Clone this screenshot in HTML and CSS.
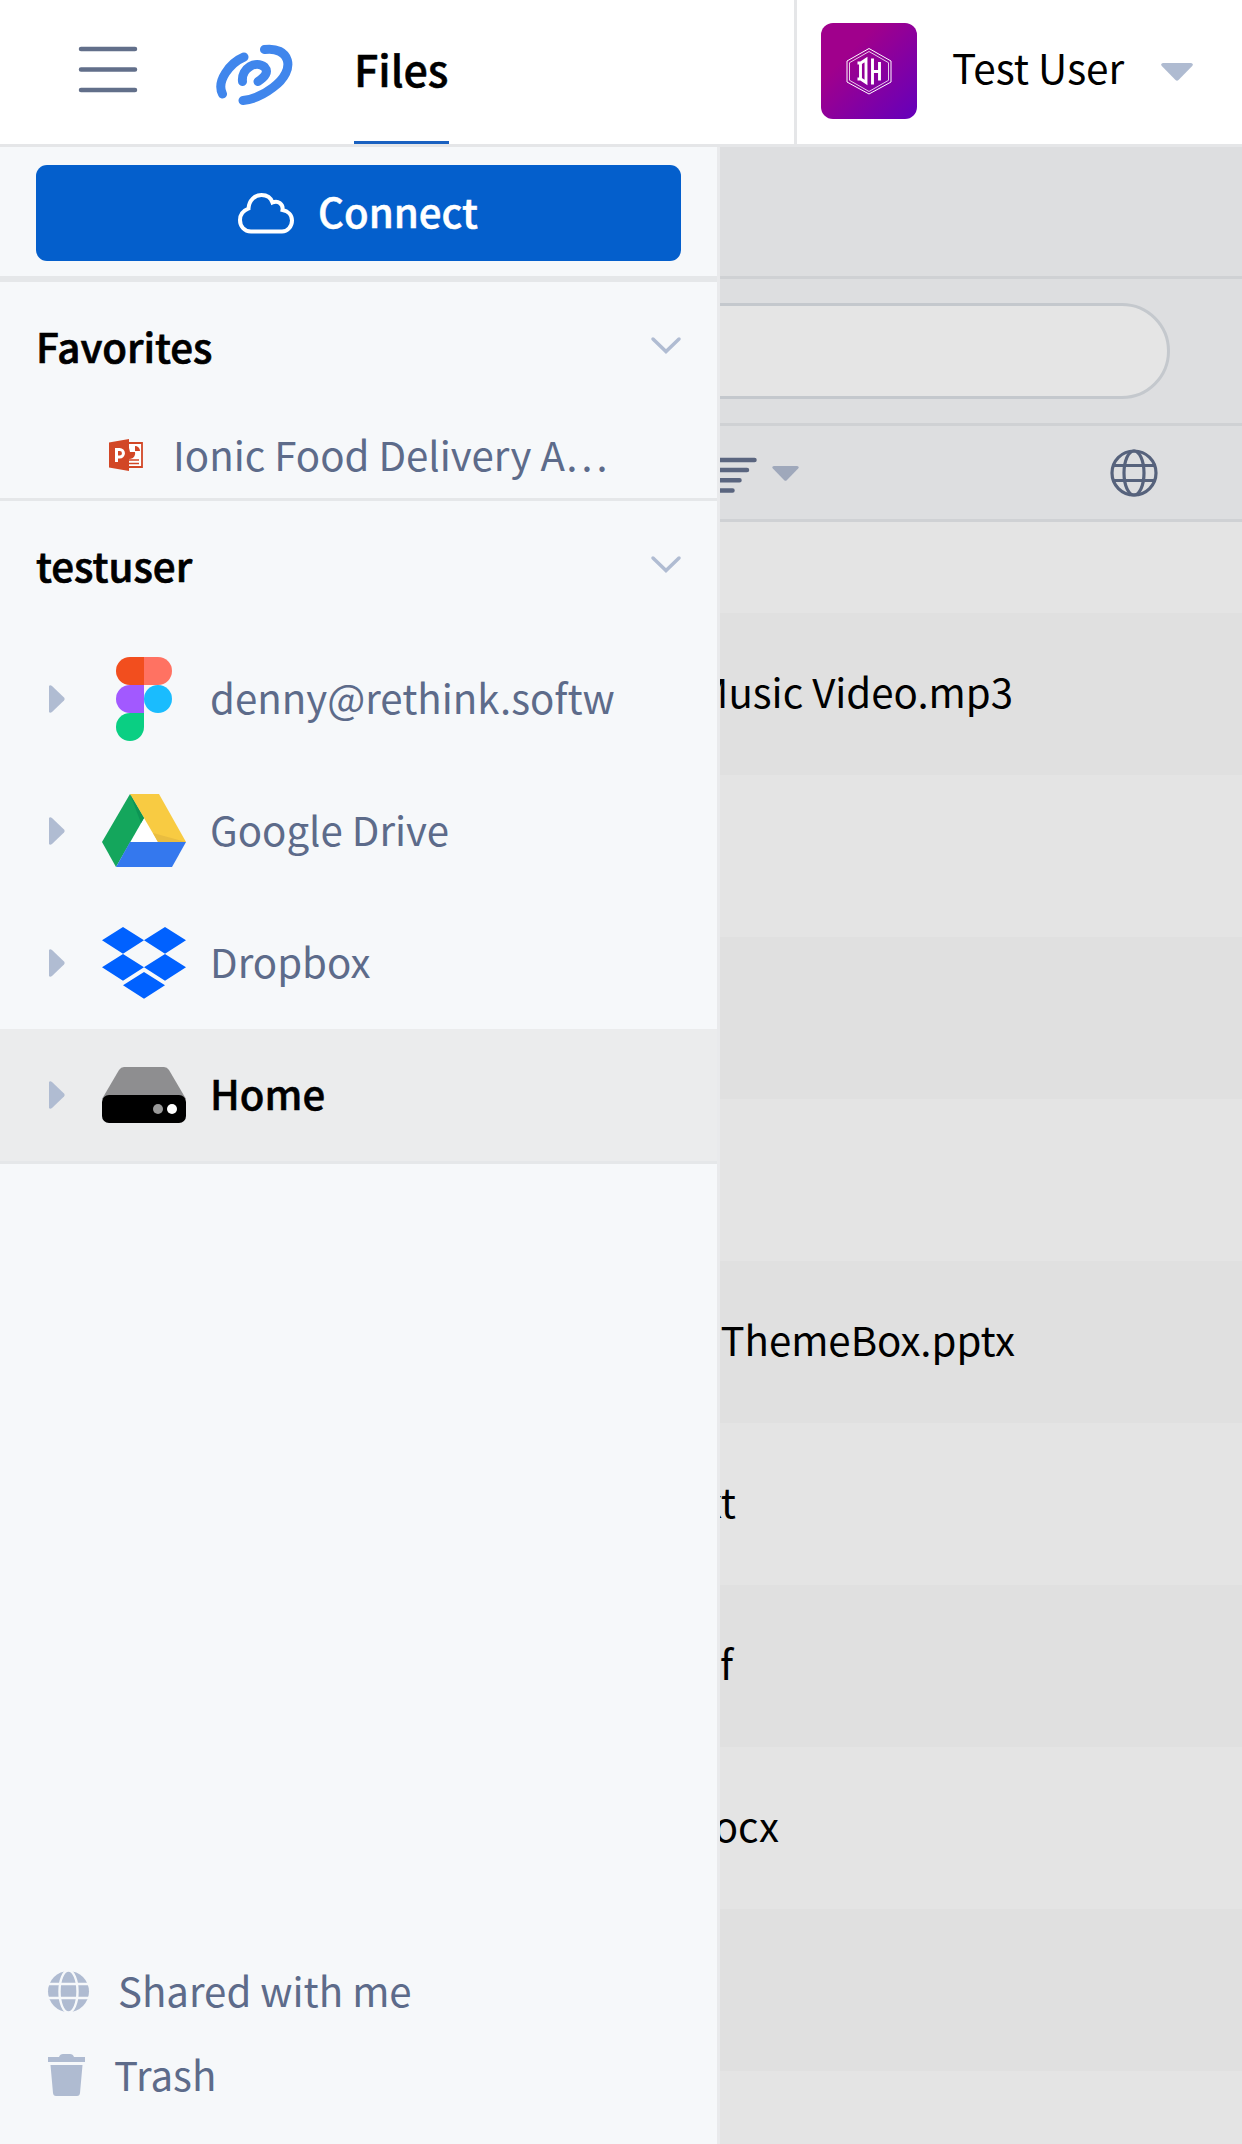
FILE: index.html
```html
<!DOCTYPE html>
<html lang="en">
<head>
<meta charset="utf-8">
<title>Files</title>
<link rel="stylesheet" href="styles.css">
</head>
<body>
<div class="app">
  <header class="topbar">
    <svg class="menu" viewBox="0 0 58 48"><path d="M2 4h54M2 24.500h54M2 45h54" /></svg>
    <svg class="brand" viewBox="0 0 76 60"><path d="M28 12C14 18 0 36 6.500 49M48.500 4.500C73 1 82 24 57 42.500Q42 54 27 55.500M26.500 36.500C25 23 40 15 48.500 22C53 27 49 32 42 36.500" /></svg>
    <nav class="tabs"><a class="tab">Files</a></nav>
    <div class="account">
      <svg class="avatar" viewBox="0 0 96 96">
        <defs><linearGradient id="avatar-fill" x1="0" y1="0" x2="1" y2="1"><stop offset=".3" stop-color="#a0008c"/><stop offset=".95" stop-color="#6800b8"/></linearGradient></defs>
        <rect width="96" height="96" rx="12" fill="url(#avatar-fill)"/>
        <g fill="none" stroke="#fff"><path d="M48 25.500l22 12.500v21L48 71 26 59V38z" stroke-width="1"/><path d="M48 28.500l19.500 11.200v17.600L48 68.500 28.500 57.300V39.700z" stroke-width=".8"/><path d="M36.500 40h3M36.500 56h3M39.500 40v16M39 40.500l6-4v23l-6-4M51.500 35.500v26M58.500 39v18.500M51.500 48.500h7" stroke-width="2.900"/></g>
      </svg>
      <span class="user">Test User</span>
      <svg class="caret" viewBox="0 0 32 18"><path d="M2 0h28q3 1 1.200 3L17.500 17q-1.500 1.500-3 0L.8 3Q-1 1 2 0z"/></svg>
    </div>
  </header>

  <main class="content">
    <div class="pathbar"></div>
    <div class="searchbar"><div class="search"></div></div>
    <div class="toolbar">
      <svg class="sort" viewBox="0 0 46 36"><path d="M2 3h41.500M2 13h34M2 23.300h26.500M2 33.500h19.500"/></svg>
      <svg class="caret caret-sort" viewBox="0 0 32 18"><path d="M2 0h28q3 1 1.200 3L17.500 17q-1.500 1.500-3 0L.8 3Q-1 1 2 0z"/></svg>
      <svg class="world" viewBox="0 0 48 48"><circle cx="24" cy="24" r="22"/><ellipse cx="24" cy="24" rx="10" ry="22"/><path d="M3.500 16.500h41M3.500 31.500h41"/></svg>
    </div>
    <div class="list">
      <div class="head"></div>
      <div class="row"><span class="name name-mp3">Music Video.mp3</span></div>
      <div class="row"></div>
      <div class="row"></div>
      <div class="row"></div>
      <div class="row"><span class="name name-pptx">ThemeBox.pptx</span></div>
      <div class="row"><span class="name name-txt">xt</span></div>
      <div class="row"><span class="name name-pdf">f</span></div>
      <div class="row"><span class="name name-docx">ocx</span></div>
      <div class="row"></div>
      <div class="row row-last"></div>
    </div>
  </main>

  <aside class="drawer">
    <div class="connect-box">
      <button class="connect"><svg class="cloud" viewBox="0 0 56 41"><path d="M13 38.500C6 38.500 2 33 2 27C2 21 5.500 17.500 10.500 15.500C11 7 17 2 23.500 2C29 2 33 5 34.500 9.500C40 7 45.500 11 44.500 17C50 18 54 22 54 27.500C54 33.500 49.500 38.500 44 38.500z"/></svg><span class="connect-label">Connect</span></button>
    </div>
    <section class="favorites">
      <h2 class="heading"><span class="heading-text">Favorites</span><svg class="chevron" viewBox="0 0 30 17"><path d="M2 2l13 12.500L28 2"/></svg></h2>
      <div class="favorite">
        <svg class="ppt" viewBox="0 0 34 32"><path d="M19 4h14v24H19z" fill="#fff" stroke="#d24726" stroke-width="1.800"/><path d="M20 21h10M20 24.500h10" stroke="#d24726" stroke-width="1.600"/><path d="M20 9a5.500 5.500 0 1 0 6 4h-5z" fill="#d24726"/><path d="M26 7v5h5a5 5 0 0 0-5-5z" fill="#d24726"/><path d="M0 3.500L20 0v32L0 28.500z" fill="#d24726"/><path d="M7.500 23V10.500h3.200a3.600 3.600 0 0 1 0 7.500H7.500" fill="none" stroke="#fff" stroke-width="3"/></svg>
        <span class="favorite-name">Ionic Food Delivery A…</span>
      </div>
    </section>
    <section class="drives">
      <h2 class="heading"><span class="heading-text">testuser</span><svg class="chevron" viewBox="0 0 30 17"><path d="M2 2l13 12.500L28 2"/></svg></h2>
      <div class="drive"><svg class="arrow" viewBox="0 0 16 28"><path d="M0 1Q1-.5 3 1L15 12.500q1.500 1.500 0 3L3 27Q1 28.500 0 27z"/></svg>
        <svg class="logo" viewBox="0 0 84 84"><path d="M28 0h14v28H28a14 14 0 0 1 0-28z" fill="#f24e1e"/><path d="M42 0h14a14 14 0 0 1 0 28H42z" fill="#ff7262"/><path d="M28 28h14v28H28a14 14 0 0 1 0-28z" fill="#a259ff"/><circle cx="56" cy="42" r="14" fill="#1abcfe"/><path d="M28 56h14v14a14 14 0 1 1-14-14z" fill="#0acf83"/></svg>
        <span class="label">denny@rethink.softw</span></div>
      <div class="drive"><svg class="arrow" viewBox="0 0 16 28"><path d="M0 1Q1-.5 3 1L15 12.500q1.500 1.500 0 3L3 27Q1 28.500 0 27z"/></svg>
        <svg class="logo" viewBox="0 0 84 84"><path d="M42 29L56 53H28z" fill="#fff"/><path d="M28 5L0 53l14 25 28-49z" fill="#14a65c"/><path d="M28 5h29l27 48H56z" fill="#f8cb42"/><path d="M28 53h56L70 78H14z" fill="#3478ee"/><path d="M28 5l14 24-3 5z" fill="#0d9555"/><path d="M51 44l33 9H56z" fill="#e9bd40"/></svg>
        <span class="label">Google Drive</span></div>
      <div class="drive"><svg class="arrow" viewBox="0 0 16 28"><path d="M0 1Q1-.5 3 1L15 12.500q1.500 1.500 0 3L3 27Q1 28.500 0 27z"/></svg>
        <svg class="logo" viewBox="0 0 84 84"><path d="M21 6l21 13.300-21 13.400L0 19.300zM63 6l21 13.300-21 13.400-21-13.400zM21 33l21 13.300-21 13.400L0 46.300zM63 33l21 13.300-21 13.400-21-13.400zM42 51l21 13.300L42 77.700 21 64.300z" fill="#0061ff"/></svg>
        <span class="label">Dropbox</span></div>
      <div class="drive drive-active"><svg class="arrow" viewBox="0 0 16 28"><path d="M0 1Q1-.5 3 1L15 12.500q1.500 1.500 0 3L3 27Q1 28.500 0 27z"/></svg>
        <svg class="logo" viewBox="0 0 84 84"><path d="M0 46L17 17q2-3 5-3h40q3 0 5 3l17 29z" fill="#8e8e90"/><rect y="42" width="84" height="28" rx="7"/><circle cx="56" cy="56" r="5" fill="#999"/><circle cx="70" cy="56" r="5" fill="#fff"/></svg>
        <span class="label">Home</span></div>
    </section>
    <footer class="links">
      <div class="link"><svg class="link-icon" viewBox="0 0 41 41"><circle cx="20.500" cy="20.500" r="20.500"/><g fill="none" stroke="#f6f8fa" stroke-width="2.400"><ellipse cx="20.500" cy="20.500" rx="9" ry="21"/><path d="M0 13h41M0 27h41"/></g></svg><span class="link-text">Shared with me</span></div>
      <div class="link link-second"><svg class="link-icon link-icon-trash" viewBox="0 0 37 42"><path d="M0 3h11q1-3 4-3h7q3 0 4 3h11v5H0zM2.500 11h32L32 39q-.3 3-3 3H8q-2.700 0-3-3z"/></svg><span class="link-text">Trash</span></div>
    </footer>
  </aside>
</div>
</body>
</html>
```
FILE: styles.css
```css
* { box-sizing: border-box; }
body { margin: 0; font-family: "Noto Sans CJK SC", "Noto Sans", sans-serif; font-size: 40.2px; line-height: 58px; color: #000; }
svg { display: block; flex: none; overflow: visible; }
span, a { white-space: nowrap; }
.app { position: relative; width: 1242px; height: 2144px; overflow: hidden; display: flex; flex-direction: column; }

.topbar { height: 147px; flex: none; display: flex; background: #fff; border-bottom: 3px solid #e5e6e8; }
.menu { width: 58px; height: 48px; margin: 45px 0 0 79px; fill: none; stroke: #626f8a; stroke-width: 4.500; stroke-linecap: round; }
.brand { width: 76px; height: 60px; margin: 45px 0 0 79px; fill: none; stroke: #4086ec; stroke-width: 9; stroke-linecap: round; }
.tabs { margin-left: 62px; display: flex; }
.tab { width: 95px; height: 144px; border-bottom: 3px solid #1a61c0; padding-top: 39px; font-size: 43px; font-weight: 500; -webkit-text-stroke: .5px; }
.account { margin-left: auto; width: 448px; border-left: 3px solid #e5e6e8; display: flex; }
.avatar { width: 96px; height: 96px; margin: 23px 0 0 24px; }
.user { margin: 38px 0 0 35px; width: 172px; font-size: 40.500px; }
.caret { width: 32px; height: 18px; margin: 63px 0 0 37px; fill: #afbbd1; }

.content { flex: 1; display: flex; flex-direction: column; background: #dddee0; }
.pathbar { height: 132px; border-bottom: 3px solid #cfd1d4; }
.searchbar { height: 147px; border-bottom: 3px solid #cfd1d4; padding: 24px 72px 0 500px; }
.search { height: 96px; background: #e5e5e5; border: 3px solid #c4c8cd; border-radius: 48px; }
.toolbar { height: 96px; border-bottom: 3px solid #cfd1d4; display: flex; padding-left: 711px; }
.sort { width: 46px; height: 36px; margin-top: 31px; fill: none; stroke: #5a657f; stroke-width: 4.500; stroke-linecap: round; }
.caret-sort { width: 27px; height: 15px; margin: 40px 0 0 15px; fill: #9fa8bb; }
.world { width: 48px; height: 48px; margin: 23px 84px 0 auto; fill: none; stroke: #56627c; stroke-width: 3.200; }
.list { flex: 1; background: #e4e4e4; }
.head { height: 91px; }
.row { height: 162px; display: flex; align-items: center; }
.row:nth-child(even) { background: #e0e0e0; }
.row-last { height: 74px; }
.name { display: block; text-align: right; margin-top: -6px; }
.name-mp3 { width: 1013px; }
.name-pptx { width: 1015px; }
.name-txt { width: 736px; }
.name-pdf { width: 733px; }
.name-docx { width: 779px; }

/* Navigation drawer, open over the file list */
.drawer { position: absolute; left: 0; top: 147px; bottom: 0; width: 720px; background: #f6f8fa; border-right: 3px solid #e9eaec; display: flex; flex-direction: column; color: #5d6b8a; }
.connect-box { height: 135px; padding: 18px 36px 0; border-bottom: 6px solid #e5e7e9; }
.connect { width: 645px; height: 96px; border: 0; border-radius: 11px; background: #045fcc; color: #fff; font: inherit; font-weight: 500; -webkit-text-stroke: .5px; padding: 0 0 0 202px; display: flex; }
.cloud { width: 56px; height: 41px; margin: 28px 24px 0 0; fill: none; stroke: #fff; stroke-width: 4; }
.connect-label { margin-top: 17px; }
.favorites { height: 219px; border-bottom: 3px solid #e5e7e9; padding-top: 34px; }
.heading { margin: 0; padding: 0 36px; font-size: 40.300px; font-weight: 500; -webkit-text-stroke: .7px; color: #000; display: flex; justify-content: space-between; }
.heading-text { padding-top: 1px; margin-bottom: -1px; }
.chevron { width: 30px; height: 17px; margin-top: 21px; fill: none; stroke: #b0bcd2; stroke-width: 3.500; stroke-linecap: round; }
.favorite { display: flex; align-items: center; margin-top: 50px; padding-left: 109px; }
.ppt { width: 34px; height: 32px; margin-top: 4px; }
.favorite-name { margin: 1px 0 -1px 30px; }
.drives { padding-top: 34px; }
.drives .heading { margin-bottom: 40px; }
.drive { height: 132px; display: flex; align-items: center; padding-left: 49px; }
.drive-active { height: 135px; background: #ebeced; border-bottom: 3px solid #e5e7e9; color: #000; font-weight: 500; -webkit-text-stroke: .5px; }
.drive-active .logo { -webkit-text-stroke: 0; }
.arrow { width: 16px; height: 28px; fill: #b0bcd2; }
.logo { width: 84px; height: 84px; margin: 0 24px 0 37px; }
.label { margin-top: -4px; }
.links { margin-top: auto; padding: 0 0 40px 48px; }
.link { display: flex; align-items: center; height: 58px; }
.link-second { margin-top: 26px; }
.link-icon { width: 41px; height: 41px; margin-right: 29px; fill: #afbbd1; }
.link-icon-trash { width: 37px; height: 42px; }
.link-text { margin-top: -2px; }
```
